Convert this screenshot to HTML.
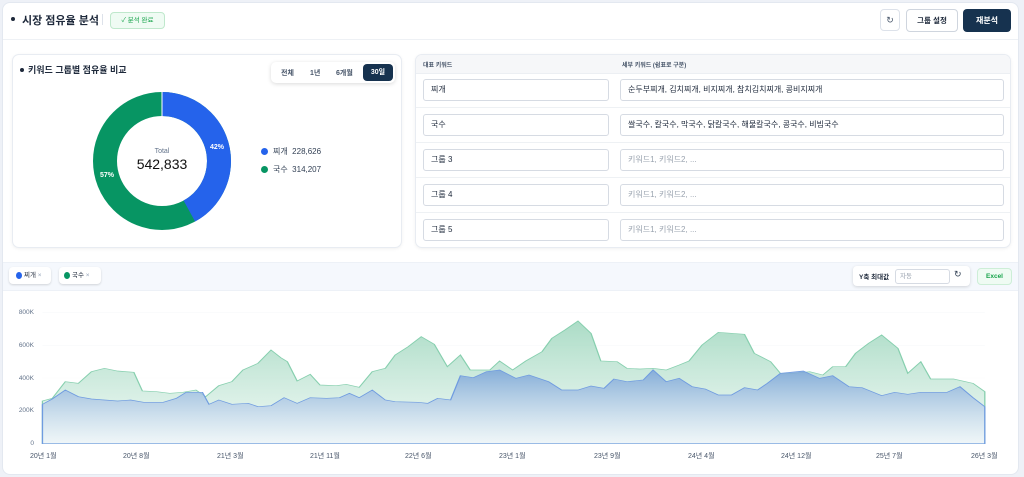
<!DOCTYPE html>
<html><head><meta charset="utf-8"><style>
*{box-sizing:border-box;margin:0;padding:0}
body{width:1024px;height:477px;background:#eef1f7;font-family:"Liberation Sans","Noto Sans CJK KR",sans-serif;color:#1e293b;position:relative;overflow:hidden}
.main{position:absolute;left:2px;top:2px;width:1017px;height:473px;background:#fff;border-radius:8px;border:1px solid #e3e8f0}
.abs{position:absolute}
.card{position:absolute;background:#fff;border:1px solid #e8ecf2;border-radius:7px;box-shadow:0 1px 3px rgba(0,0,0,.06)}
.inp{position:absolute;height:22px;border:1px solid #d6dbe3;border-radius:3px;font-size:8px;padding-left:7px;line-height:20px;background:#fff}
.ph{color:#9aa3af}
.xl{position:absolute;top:451px;font-size:7px;color:#475569}
.yl{position:absolute;left:18px;font-size:6.5px;color:#64748b;width:16px;text-align:right}
</style></head><body>
<div class="main"></div>
<div class="abs" style="left:11px;top:17px;width:4px;height:4px;border-radius:50%;background:#1e293b"></div>
<div class="abs" style="left:22px;top:12px;font-size:11px;font-weight:bold">시장 점유율 분석</div>
<div class="abs" style="left:102px;top:14px;width:1px;height:11px;background:#dde2ea"></div>
<div class="abs" style="left:110px;top:12px;width:55px;height:17px;border:1px solid #bfe8cc;background:#effbf3;border-radius:4px;font-size:6.5px;color:#16a34a;text-align:center;line-height:15px">✓ 분석 완료</div>
<div class="abs" style="left:880px;top:9px;width:20px;height:22px;border:1px solid #dde2ea;border-radius:4px;font-size:9px;text-align:center;line-height:20px;color:#475569">↻</div>
<div class="abs" style="left:906px;top:9px;width:52px;height:23px;border:1px solid #cfd5de;border-radius:4px;font-size:7.5px;text-align:center;line-height:21px;font-weight:bold">그룹 설정</div>
<div class="abs" style="left:963px;top:9px;width:48px;height:23px;background:#16324f;border-radius:4px;font-size:8px;text-align:center;line-height:23px;font-weight:bold;color:#fff">재분석</div>
<div class="abs" style="left:3px;top:39px;width:1015px;height:1px;background:#eef1f5"></div>

<div class="card" style="left:12px;top:54px;width:390px;height:194px"></div>
<div class="abs" style="left:20px;top:68px;width:4px;height:4px;border-radius:50%;background:#1e293b"></div>
<div class="abs" style="left:28px;top:63px;font-size:9px;font-weight:bold">키워드 그룹별 점유율 비교</div>
<div class="abs" style="left:271px;top:62px;width:124px;height:21px;background:#fff;border-radius:5px;box-shadow:0 1px 4px rgba(0,0,0,.15)"></div>
<div class="abs" style="left:281px;top:68px;font-size:7px;font-weight:bold;color:#475569">전체</div>
<div class="abs" style="left:310px;top:68px;font-size:7px;font-weight:bold;color:#475569">1년</div>
<div class="abs" style="left:336px;top:68px;font-size:7px;font-weight:bold;color:#475569">6개월</div>
<div class="abs" style="left:363px;top:64px;width:30px;height:17px;background:#16324f;border-radius:4px;font-size:7px;font-weight:bold;color:#fff;text-align:center;line-height:17px">30일</div>
<svg class="abs" style="left:92px;top:91px" width="140" height="140" viewBox="0 0 140 140">
<circle cx="70" cy="70" r="57" fill="none" stroke="#079563" stroke-width="24"/>
<circle cx="70" cy="70" r="57" fill="none" stroke="#2563eb" stroke-width="24" stroke-dasharray="150.4 400" transform="rotate(-90 70 70)"/>
<line x1="70" y1="1" x2="70" y2="26" stroke="#fff" stroke-width="1"/>
<text x="125" y="58" font-size="7" font-weight="bold" fill="#fff" text-anchor="middle" font-family="Liberation Sans">42%</text>
<text x="15" y="86" font-size="7" font-weight="bold" fill="#fff" text-anchor="middle" font-family="Liberation Sans">57%</text>
</svg>
<div class="abs" style="left:142px;top:148px;width:40px;text-align:center;font-size:7px;color:#64748b">Total</div>
<div class="abs" style="left:122px;top:156px;width:80px;text-align:center;font-size:14px;color:#111">542,833</div>
<div class="abs" style="left:261px;top:148px;width:7px;height:7px;border-radius:50%;background:#2563eb"></div>
<div class="abs" style="left:273px;top:146px;font-size:8px;color:#334155">찌개&nbsp; 228,626</div>
<div class="abs" style="left:261px;top:166px;width:7px;height:7px;border-radius:50%;background:#079563"></div>
<div class="abs" style="left:273px;top:164px;font-size:8px;color:#334155">국수&nbsp; 314,207</div>

<div class="card" style="left:415px;top:54px;width:596px;height:194px;overflow:hidden">
<div style="height:19px;background:#f6f7f9;border-bottom:1px solid #eceff3"></div>
</div>
<div class="abs" style="left:423px;top:60px;font-size:6px;font-weight:bold;color:#475569">대표 키워드</div>
<div class="abs" style="left:622px;top:60px;font-size:6px;font-weight:bold;color:#475569">세부 키워드 (쉼표로 구분)</div>
<div class="abs" style="left:416px;top:107px;width:594px;height:1px;background:#eef1f4"></div>
<div class="abs" style="left:416px;top:142px;width:594px;height:1px;background:#eef1f4"></div>
<div class="abs" style="left:416px;top:177px;width:594px;height:1px;background:#eef1f4"></div>
<div class="abs" style="left:416px;top:212px;width:594px;height:1px;background:#eef1f4"></div>
<div class="inp" style="left:423px;top:79px;width:186px">찌개</div>
<div class="inp" style="left:620px;top:79px;width:384px">순두부찌개, 김치찌개, 비지찌개, 참치김치찌개, 콩비지찌개</div>
<div class="inp" style="left:423px;top:114px;width:186px">국수</div>
<div class="inp" style="left:620px;top:114px;width:384px">쌀국수, 칼국수, 막국수, 닭칼국수, 해물칼국수, 콩국수, 비빔국수</div>
<div class="inp" style="left:423px;top:149px;width:186px">그룹 3</div>
<div class="inp ph" style="left:620px;top:149px;width:384px">키워드1, 키워드2, ...</div>
<div class="inp" style="left:423px;top:184px;width:186px">그룹 4</div>
<div class="inp ph" style="left:620px;top:184px;width:384px">키워드1, 키워드2, ...</div>
<div class="inp" style="left:423px;top:219px;width:186px">그룹 5</div>
<div class="inp ph" style="left:620px;top:219px;width:384px">키워드1, 키워드2, ...</div>

<div class="abs" style="left:3px;top:262px;width:1015px;height:29px;background:#f5f8fd;border-top:1px solid #edf1f7;border-bottom:1px solid #edf1f7"></div>
<div class="abs" style="left:9px;top:267px;width:42px;height:17px;background:#fff;border-radius:4px;box-shadow:0 1px 2px rgba(0,0,0,.15);font-size:6.5px;line-height:17px;padding-left:15px">찌개 <span style="color:#94a3b8">×</span></div>
<div class="abs" style="left:16px;top:272px;width:6px;height:7px;border-radius:50%;background:#2563eb"></div>
<div class="abs" style="left:59px;top:267px;width:42px;height:17px;background:#fff;border-radius:4px;box-shadow:0 1px 2px rgba(0,0,0,.15);font-size:6.5px;line-height:17px;padding-left:13px">국수 <span style="color:#94a3b8">×</span></div>
<div class="abs" style="left:64px;top:272px;width:6px;height:7px;border-radius:50%;background:#079563"></div>
<div class="abs" style="left:853px;top:266px;width:117px;height:20px;background:#fff;border-radius:4px;box-shadow:0 1px 3px rgba(0,0,0,.15)"></div>
<div class="abs" style="left:859px;top:271px;font-size:6.5px;font-weight:bold">Y축 최대값</div>
<div class="abs" style="left:895px;top:269px;width:55px;height:15px;border:1px solid #d6dbe3;border-radius:3px;font-size:6.5px;color:#9aa3af;padding-left:4px;line-height:13px">자동</div>
<div class="abs" style="left:954px;top:269px;font-size:9px;color:#334155">↻</div>
<div class="abs" style="left:977px;top:268px;width:35px;height:17px;background:#effbf3;border:1px solid #cdeed7;border-radius:4px;font-size:6.5px;font-weight:bold;color:#16a34a;text-align:center;line-height:15px">Excel</div>

<div class="yl" style="top:309px">800K</div>
<div class="yl" style="top:342px">600K</div>
<div class="yl" style="top:375px">400K</div>
<div class="yl" style="top:407px">200K</div>
<div class="yl" style="top:440px">0</div>
<svg class="abs" style="left:0;top:255px" width="1024" height="222" viewBox="0 0 1568 666" preserveAspectRatio="none">
<defs>
<linearGradient id="g" x1="0" y1="0" x2="0" y2="1"><stop offset="0" stop-color="#8fd0b3" stop-opacity=".75"/><stop offset="1" stop-color="#e6f5ee" stop-opacity=".6"/></linearGradient>
<linearGradient id="b" x1="0" y1="0" x2="0" y2="1"><stop offset="0" stop-color="#7aa3d8" stop-opacity=".85"/><stop offset="1" stop-color="#eef3fb" stop-opacity=".5"/></linearGradient>
</defs>
<g stroke="#f1f4f8" stroke-width="1"><line x1="65" y1="173" x2="1508" y2="173"/><line x1="65" y1="271" x2="1508" y2="271"/><line x1="65" y1="369" x2="1508" y2="369"/><line x1="65" y1="467" x2="1508" y2="467"/></g>
<line x1="65" y1="566" x2="1508" y2="566" stroke="#dfe3e8"/>
<polygon fill="url(#g)" stroke="#86cfae" stroke-width="2" points="65,566 65,438 80,430 100,380 120,385 140,350 160,340 180,348 205,352 218,408 240,410 260,415 280,412 300,405 315,425 335,392 355,380 372,345 395,325 415,285 430,308 440,320 455,378 475,358 490,390 515,392 530,388 550,397 570,350 590,340 605,300 625,275 645,245 665,268 685,335 705,300 720,345 750,345 765,318 785,345 805,318 830,290 845,250 865,225 885,198 905,235 920,318 945,320 960,340 980,342 1000,340 1020,345 1040,330 1055,318 1075,270 1100,232 1140,238 1155,295 1180,320 1195,355 1215,355 1240,350 1260,360 1275,335 1295,335 1310,295 1330,265 1350,240 1375,280 1390,355 1410,320 1425,372 1460,372 1490,385 1508,410 1508,566"/>
<polygon fill="url(#b)" stroke="#6f9be0" stroke-width="2" points="65,566 65,448 80,432 100,405 120,425 140,432 180,438 200,435 220,442 250,442 270,430 285,412 310,412 320,448 335,435 355,448 380,445 395,455 415,452 435,428 455,445 475,428 500,430 520,428 535,415 550,428 570,405 590,435 605,440 640,442 655,445 670,430 690,435 705,362 725,368 745,350 765,345 790,370 810,360 840,380 860,405 885,405 905,393 925,400 940,372 960,380 985,375 1000,345 1020,380 1040,370 1060,395 1080,402 1100,420 1120,420 1140,398 1160,405 1175,385 1195,355 1230,348 1255,370 1275,362 1300,395 1320,398 1350,422 1370,412 1390,418 1410,412 1450,412 1470,395 1490,428 1508,455 1508,566"/>
</svg>
<div class="xl" style="left:30px">20년 1월</div>
<div class="xl" style="left:123px">20년 8월</div>
<div class="xl" style="left:217px">21년 3월</div>
<div class="xl" style="left:310px">21년 11월</div>
<div class="xl" style="left:405px">22년 6월</div>
<div class="xl" style="left:499px">23년 1월</div>
<div class="xl" style="left:594px">23년 9월</div>
<div class="xl" style="left:688px">24년 4월</div>
<div class="xl" style="left:781px">24년 12월</div>
<div class="xl" style="left:876px">25년 7월</div>
<div class="xl" style="left:971px">26년 3월</div>
</body></html>
